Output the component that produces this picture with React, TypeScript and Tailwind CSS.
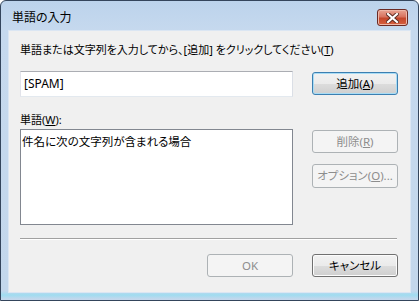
import React from "react";

const font = { fontFamily: '"Noto Sans", "Noto Sans CJK JP", sans-serif', fontFeatureSettings: '"palt"' } as const;

const Btn = ({ children, disabled, primary, className = "" }: { children: React.ReactNode; disabled?: boolean; primary?: boolean; className?: string }) => {
  if (disabled) {
    return (
      <div className={`flex h-[23px] w-[86px] items-center justify-center rounded-[3px] border border-[#adb2b5] bg-[#f4f4f4] text-[11.5px] text-[#8d8d8d] ${className}`}>
        {children}
      </div>
    );
  }
  return (
    <div
      className={`flex h-[23px] w-[86px] items-center justify-center rounded-[3px] border text-[11.5px] text-black ${
        primary ? "border-[#3c7fb1] shadow-[inset_0_0_0_1px_#a8dcf5]" : "border-[#707070] shadow-[inset_0_0_0_1px_#fcfcfc]"
      } bg-[linear-gradient(#f2f2f2_0%,#ebebeb_50%,#dddddd_50%,#cfcfcf_100%)] ${className}`}
    >
      {children}
    </div>
  );
};

export default function App() {
  return (
    <div className="h-[301px] w-[419px] bg-white" style={font}>
      <div className="flex h-full w-full flex-col rounded-t-[6px] border border-[#34455c] bg-[linear-gradient(#bcd3ec,#c6d9ee_30px,#c3d7ec_290px,#9fdcf0_294px,#c3d7ec_298px)] px-[7px] pb-[7px]">
        {/* title bar */}
        <div className="flex h-[29px] items-start justify-between">
          <span className="mt-[9px] pl-[4px] text-[12px] leading-[16px] text-black">単語の入力</span>
          <div className="mr-[3px] mt-[8px] flex h-[17px] w-[31px] items-center justify-center rounded-[3px] border border-[#6b2a24] bg-[linear-gradient(#e8a493_0%,#d8735f_45%,#c4472c_55%,#d6603f_100%)] shadow-[inset_0_0_0_1px_#eeb7a8]">
            <svg width="13" height="10" viewBox="0 0 13 10">
              <path d="M2 1 L11 9 M11 1 L2 9" stroke="#5a2a22" strokeWidth="4" strokeLinecap="square" />
              <path d="M2 1 L11 9 M11 1 L2 9" stroke="#ffffff" strokeWidth="2.2" strokeLinecap="square" />
            </svg>
          </div>
        </div>

        {/* client area */}
        <div className="flex flex-1 flex-col border border-[#dbe6f3] bg-[#f0f0f0] pl-[11px] pr-[12px] pt-[11px] text-[11px] text-black">
          <p className="h-[16px] leading-[16px]">
            単語または文字列を入力してから、[追加] をクリックしてください(<span className="underline">T</span>)
          </p>
          <div className="mt-[13px] flex gap-[19px]">
            <div className="flex h-[26px] w-[273px] items-center border border-[#abadb3] border-b-[#e3e9ef] border-l-[#e2e3ea] border-r-[#dbdfe6] bg-white pl-[3px] text-[12px]">
              [SPAM]
            </div>
            <Btn primary className="mt-[1px] h-[22px]">
              追加(<span className="underline">A</span>)
            </Btn>
          </div>

          <p className="mt-[15px] h-[16px] leading-[16px]">
            単語(<span className="underline">W</span>):
          </p>
          <div className="mt-[1px] flex gap-[19px]">
            <div className="h-[96px] w-[273px] border border-[#828790] bg-white pl-[1px] pt-[4px] text-[11.5px] leading-[16px]">
              件名に次の文字列が含まれる場合
            </div>
            <div className="mt-[1px] flex flex-col gap-[11px]">
              <Btn disabled>
                削除(<span className="underline">R</span>)
              </Btn>
              <Btn disabled className="h-[24px]">
                オプション(<span className="underline">O</span>)...
              </Btn>
            </div>
          </div>

          <div className="mt-[13px] h-[2px] w-[377px] border-t border-[#a0a0a0] border-b border-b-white" />

          <div className="mt-[14px] flex w-[378px] justify-end gap-[19px]">
            <Btn disabled>OK</Btn>
            <Btn>キャンセル</Btn>
          </div>
        </div>
      </div>
    </div>
  );
}
